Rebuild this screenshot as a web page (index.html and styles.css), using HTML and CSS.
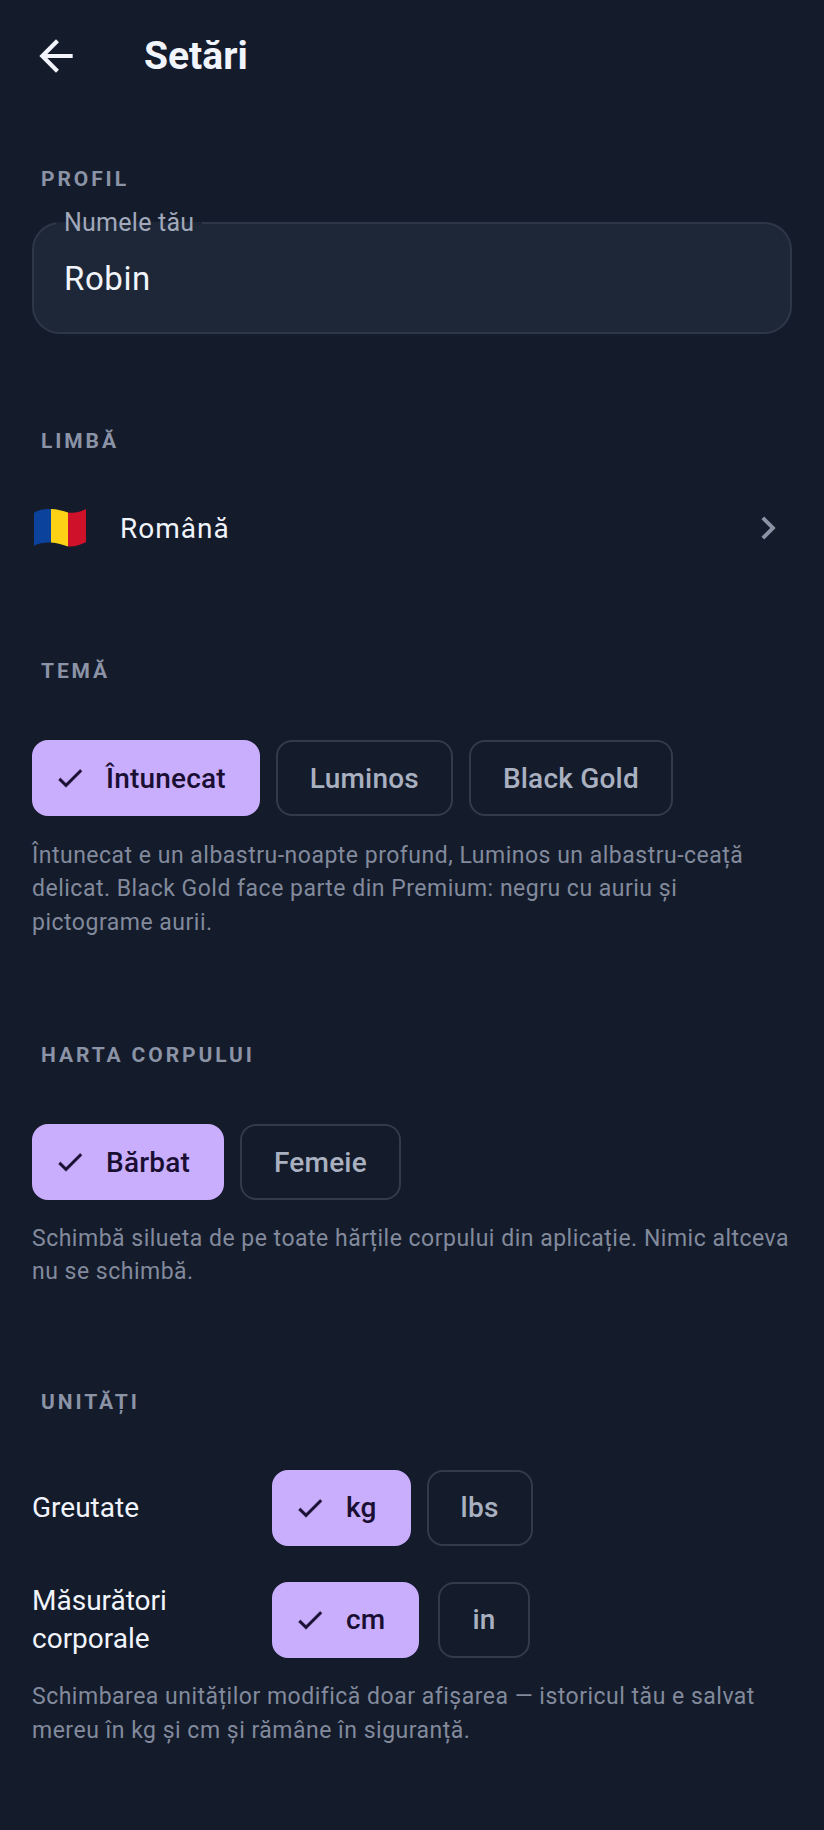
FILE: index.html
```html
<!DOCTYPE html>
<html lang="ro">
<head>
    <meta charset="UTF-8">
    <meta name="viewport" content="width=device-width, initial-scale=1.0">
    <title>Setări</title>
    <link rel="stylesheet" href="styles.css">
</head>
<body>
    <!-- Header -->
    <div class="header">
        <svg class="back-icon" viewBox="0 0 24 24"><path d="M20 11H7.83l5.59-5.59L12 4l-8 8 8 8 1.41-1.41L7.83 13H20v-2z"/></svg>
        <h1 class="title">Setări</h1>
    </div>

    <div class="container">
        <!-- Profil -->
        <div class="section-label profile-label">PROFIL</div>
        <fieldset class="name-field">
            <legend>Numele tău</legend>
            <div class="name-value">Robin</div>
        </fieldset>

        <!-- Limbă -->
        <div class="section-label language-label">LIMBĂ</div>
        <div class="language-row">
            <svg class="flag" viewBox="0 0 52 38">
                <path fill="#0a429c" d="M0 4C3 1.5 8 0 17 0v33.5C8 33.5 3 35 0 37z"/>
                <path fill="#fdd116" d="M17 0c6 0 12 2 17 3.500v34c-5-1.500-11-4-17-4z"/>
                <path fill="#cf1129" d="M34 3.500c6 1 13-.5 18-3.500v33c-5 3-12 5-18 4.500z"/>
            </svg>
            <span class="language-name">Română</span>
            <svg class="chevron" viewBox="0 0 24 24"><path d="M10 6L8.59 7.41 13.17 12l-4.58 4.59L10 18l6-6z"/></svg>
        </div>

        <!-- Temă -->
        <div class="section-label theme-label">TEMĂ</div>
        <div class="chips">
            <div class="chip selected">
                <svg class="check" viewBox="0 0 24 24"><path d="M9 16.17L4.83 12l-1.41 1.41L9 19 21 7l-1.41-1.41z"/></svg>
                Întunecat
            </div>
            <div class="chip">Luminos</div>
            <div class="chip">Black Gold</div>
        </div>
        <p class="hint theme-hint">Întunecat e un albastru-noapte profund, Luminos un albastru-ceață delicat. Black Gold face parte din Premium: negru cu auriu și pictograme aurii.</p>

        <!-- Harta corpului -->
        <div class="section-label body-label">HARTA CORPULUI</div>
        <div class="chips">
            <div class="chip selected">
                <svg class="check" viewBox="0 0 24 24"><path d="M9 16.17L4.83 12l-1.41 1.41L9 19 21 7l-1.41-1.41z"/></svg>
                Bărbat
            </div>
            <div class="chip">Femeie</div>
        </div>
        <p class="hint">Schimbă silueta de pe toate hărțile corpului din aplicație. Nimic altceva nu se schimbă.</p>

        <!-- Unități -->
        <div class="section-label units-label">UNITĂȚI</div>
        <div class="unit-row">
            <div class="unit-name">Greutate</div>
            <div class="chips">
                <div class="chip selected">
                    <svg class="check" viewBox="0 0 24 24"><path d="M9 16.17L4.83 12l-1.41 1.41L9 19 21 7l-1.41-1.41z"/></svg>
                    kg
                </div>
                <div class="chip">lbs</div>
            </div>
        </div>
        <div class="unit-row second">
            <div class="unit-name">Măsurători corporale</div>
            <div class="chips">
                <div class="chip selected">
                    <svg class="check" viewBox="0 0 24 24"><path d="M9 16.17L4.83 12l-1.41 1.41L9 19 21 7l-1.41-1.41z"/></svg>
                    cm
                </div>
                <div class="chip">in</div>
            </div>
        </div>
        <p class="hint units-hint">Schimbarea unităților modifică doar afișarea — istoricul tău e salvat mereu în kg și cm și rămâne în siguranță.</p>
    </div>
</body>
</html>
```

FILE: styles.css
```css
* {
    margin: 0;
    padding: 0;
    box-sizing: border-box;
}

body {
    font-family: Roboto, "Noto Sans", sans-serif;
    background: #141b2b;
    color: #f1f4fb;
    height: 1830px;
    overflow: hidden;
}

/* Header */
.header {
    display: flex;
    align-items: center;
    gap: 63px;
    height: 48px;
    margin-top: 32px;
    padding-left: 31px;
}

.back-icon {
    width: 50px;
    height: 50px;
    fill: #f1f4fb;
}

.title {
    font-size: 39px;
    font-weight: 700;
    line-height: 48px;
}

.container {
    padding: 0 32px;
}

/* Section titles */
.section-label {
    padding-left: 9px;
    font-size: 21px;
    font-weight: 700;
    line-height: 28px;
    letter-spacing: 2.9px;
    color: #8b93a6;
}

.profile-label {
    margin-top: 85px;
}

.language-label {
    margin-top: 93px;
}

.theme-label {
    margin-top: 85px;
}

.theme-label + .chips {
    margin-top: 55px;
}

.body-label {
    margin-top: 102px;
}

.body-label + .chips {
    margin-top: 55px;
}

.units-label {
    margin-top: 99px;
}

/* Name field */
.name-field {
    margin-top: 15px;
    height: 126px;
    background: #1e2737;
    border: 2px solid #2e3747;
    border-radius: 28px;
    padding: 0 30px;
}

.name-field legend {
    margin-left: -8px;
    padding: 0 8px;
    font-size: 25px;
    line-height: 30px;
    letter-spacing: 0.25px;
    color: #a1a9ba;
}

.name-value {
    margin-top: 19px;
    font-size: 33px;
    line-height: 44px;
    letter-spacing: 0.6px;
}

/* Language */
.language-row {
    display: flex;
    align-items: center;
    height: 88px;
    margin-top: 29px;
}

.flag {
    width: 52px;
    height: 38px;
    margin-left: 2px;
}

.language-name {
    flex: 1;
    margin-left: 34px;
    font-size: 28px;
    letter-spacing: 1px;
}

.chevron {
    width: 46px;
    height: 46px;
    margin-right: 1px;
    fill: #8b93a6;
}

/* Chips */
.chips {
    display: flex;
    gap: 16px;
    margin-top: 56px;
}

.chip {
    display: flex;
    align-items: center;
    height: 76px;
    padding: 0 32px;
    border: 2px solid #333b4b;
    border-radius: 16px;
    font-size: 28px;
    font-weight: 500;
    letter-spacing: 0.2px;
    color: #a9b0c0;
}

.chip.selected {
    gap: 20px;
    padding: 0 32px 0 20px;
    background: #c9aefd;
    border-color: #c9aefd;
    color: #1a0f33;
}

.check {
    width: 32px;
    height: 32px;
    fill: #1a0f33;
    stroke: #1a0f33;
    stroke-width: 0.4;
}

/* Helper texts */
.hint {
    margin-top: 21.5px;
    font-size: 23px;
    line-height: 33.5px;
    letter-spacing: 0.5px;
    color: #828a9c;
}

.theme-hint,
.units-hint {
    margin-top: 22.5px;
}

/* Units */
.unit-row {
    display: flex;
    align-items: center;
    margin-top: 54px;
}

.unit-row.second {
    margin-top: 36px;
}

.unit-row.second .chips {
    gap: 19px;
}

.unit-row .chips {
    margin-top: 0;
}

.unit-name {
    width: 240px;
    font-size: 28px;
    line-height: 38px;
    padding-right: 60px;
}
```
